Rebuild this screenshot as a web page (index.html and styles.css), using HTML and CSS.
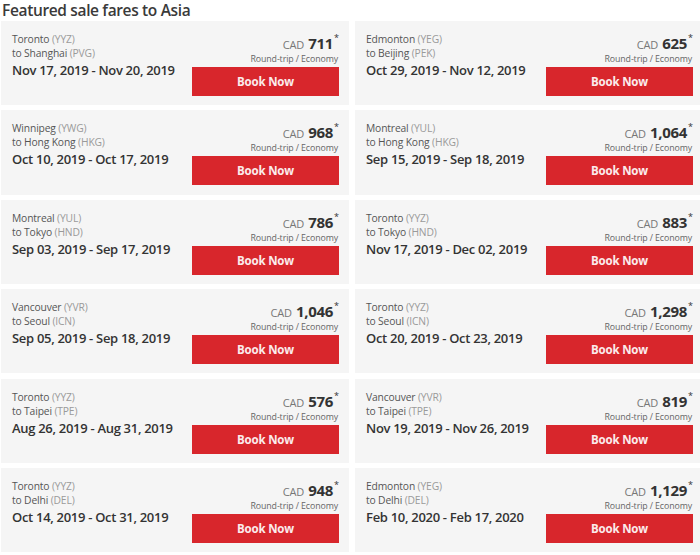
FILE: index.html
```html
<!DOCTYPE html>
<html>
<head>
<meta charset="utf-8">
<link rel="stylesheet" href="styles.css">
</head>
<body>
<h1 class="title">Featured sale fares to Asia</h1>
<div class="grid">
  <div class="card">
    <div class="route">
      <div class="city">Toronto <span class="code">(YYZ)</span></div>
      <div class="city">to Shanghai <span class="code">(PVG)</span></div>
      <div class="dates">Nov 17, 2019 - Nov 20, 2019</div>
    </div>
    <div class="fare">
      <div class="price"><span class="cur">CAD</span> <span class="amt">711</span><sup class="star">*</sup></div>
      <div class="trip">Round-trip / Economy</div>
      <a class="book">Book Now</a>
    </div>
  </div>
  <div class="card">
    <div class="route">
      <div class="city">Edmonton <span class="code">(YEG)</span></div>
      <div class="city">to Beijing <span class="code">(PEK)</span></div>
      <div class="dates">Oct 29, 2019 - Nov 12, 2019</div>
    </div>
    <div class="fare">
      <div class="price"><span class="cur">CAD</span> <span class="amt">625</span><sup class="star">*</sup></div>
      <div class="trip">Round-trip / Economy</div>
      <a class="book">Book Now</a>
    </div>
  </div>
  <div class="card">
    <div class="route">
      <div class="city">Winnipeg <span class="code">(YWG)</span></div>
      <div class="city">to Hong Kong <span class="code">(HKG)</span></div>
      <div class="dates">Oct 10, 2019 - Oct 17, 2019</div>
    </div>
    <div class="fare">
      <div class="price"><span class="cur">CAD</span> <span class="amt">968</span><sup class="star">*</sup></div>
      <div class="trip">Round-trip / Economy</div>
      <a class="book">Book Now</a>
    </div>
  </div>
  <div class="card">
    <div class="route">
      <div class="city">Montreal <span class="code">(YUL)</span></div>
      <div class="city">to Hong Kong <span class="code">(HKG)</span></div>
      <div class="dates">Sep 15, 2019 - Sep 18, 2019</div>
    </div>
    <div class="fare">
      <div class="price"><span class="cur">CAD</span> <span class="amt">1,064</span><sup class="star">*</sup></div>
      <div class="trip">Round-trip / Economy</div>
      <a class="book">Book Now</a>
    </div>
  </div>
  <div class="card">
    <div class="route">
      <div class="city">Montreal <span class="code">(YUL)</span></div>
      <div class="city">to Tokyo <span class="code">(HND)</span></div>
      <div class="dates">Sep 03, 2019 - Sep 17, 2019</div>
    </div>
    <div class="fare">
      <div class="price"><span class="cur">CAD</span> <span class="amt">786</span><sup class="star">*</sup></div>
      <div class="trip">Round-trip / Economy</div>
      <a class="book">Book Now</a>
    </div>
  </div>
  <div class="card">
    <div class="route">
      <div class="city">Toronto <span class="code">(YYZ)</span></div>
      <div class="city">to Tokyo <span class="code">(HND)</span></div>
      <div class="dates">Nov 17, 2019 - Dec 02, 2019</div>
    </div>
    <div class="fare">
      <div class="price"><span class="cur">CAD</span> <span class="amt">883</span><sup class="star">*</sup></div>
      <div class="trip">Round-trip / Economy</div>
      <a class="book">Book Now</a>
    </div>
  </div>
  <div class="card">
    <div class="route">
      <div class="city">Vancouver <span class="code">(YVR)</span></div>
      <div class="city">to Seoul <span class="code">(ICN)</span></div>
      <div class="dates">Sep 05, 2019 - Sep 18, 2019</div>
    </div>
    <div class="fare">
      <div class="price"><span class="cur">CAD</span> <span class="amt">1,046</span><sup class="star">*</sup></div>
      <div class="trip">Round-trip / Economy</div>
      <a class="book">Book Now</a>
    </div>
  </div>
  <div class="card">
    <div class="route">
      <div class="city">Toronto <span class="code">(YYZ)</span></div>
      <div class="city">to Seoul <span class="code">(ICN)</span></div>
      <div class="dates">Oct 20, 2019 - Oct 23, 2019</div>
    </div>
    <div class="fare">
      <div class="price"><span class="cur">CAD</span> <span class="amt">1,298</span><sup class="star">*</sup></div>
      <div class="trip">Round-trip / Economy</div>
      <a class="book">Book Now</a>
    </div>
  </div>
  <div class="card">
    <div class="route">
      <div class="city">Toronto <span class="code">(YYZ)</span></div>
      <div class="city">to Taipei <span class="code">(TPE)</span></div>
      <div class="dates">Aug 26, 2019 - Aug 31, 2019</div>
    </div>
    <div class="fare">
      <div class="price"><span class="cur">CAD</span> <span class="amt">576</span><sup class="star">*</sup></div>
      <div class="trip">Round-trip / Economy</div>
      <a class="book">Book Now</a>
    </div>
  </div>
  <div class="card">
    <div class="route">
      <div class="city">Vancouver <span class="code">(YVR)</span></div>
      <div class="city">to Taipei <span class="code">(TPE)</span></div>
      <div class="dates">Nov 19, 2019 - Nov 26, 2019</div>
    </div>
    <div class="fare">
      <div class="price"><span class="cur">CAD</span> <span class="amt">819</span><sup class="star">*</sup></div>
      <div class="trip">Round-trip / Economy</div>
      <a class="book">Book Now</a>
    </div>
  </div>
  <div class="card">
    <div class="route">
      <div class="city">Toronto <span class="code">(YYZ)</span></div>
      <div class="city">to Delhi <span class="code">(DEL)</span></div>
      <div class="dates">Oct 14, 2019 - Oct 31, 2019</div>
    </div>
    <div class="fare">
      <div class="price"><span class="cur">CAD</span> <span class="amt">948</span><sup class="star">*</sup></div>
      <div class="trip">Round-trip / Economy</div>
      <a class="book">Book Now</a>
    </div>
  </div>
  <div class="card">
    <div class="route">
      <div class="city">Edmonton <span class="code">(YEG)</span></div>
      <div class="city">to Delhi <span class="code">(DEL)</span></div>
      <div class="dates">Feb 10, 2020 - Feb 17, 2020</div>
    </div>
    <div class="fare">
      <div class="price"><span class="cur">CAD</span> <span class="amt">1,129</span><sup class="star">*</sup></div>
      <div class="trip">Round-trip / Economy</div>
      <a class="book">Book Now</a>
    </div>
  </div>
</div>
</body>
</html>
```
FILE: styles.css
```css
html, body {
  margin: 0;
  padding: 0;
  background: #fff;
}
body {
  width: 700px;
  height: 555px;
  overflow: hidden;
  font-family: "Open Sans", "Liberation Sans", sans-serif;
  color: #333;
}
.title {
  margin: 0 0 0 2px;
  font-size: 15.5px;
  letter-spacing: -0.35px;
  line-height: 21px;
  font-weight: 600;
  color: #3a3a3a;
}
.grid {
  display: grid;
  grid-template-columns: 348px 348px;
  column-gap: 6px;
  row-gap: 5.2px;
  padding-left: 1px;
}
.card {
  background: #f5f5f5;
  height: 84.2px;
  box-sizing: border-box;
  padding: 11px 10px 0 11px;
  display: flex;
  justify-content: space-between;
}
.route {
  display: flex;
  flex-direction: column;
}
.city {
  font-size: 10.3px;
  letter-spacing: -0.15px;
  line-height: 14px;
  color: #555;
}
.code {
  color: #9a9a9a;
}
.dates {
  font-size: 13px;
  letter-spacing: -0.3px;
  line-height: 20px;
  font-weight: 600;
  color: #333;
  white-space: nowrap;
}
.fare {
  width: 147px;
  display: flex;
  flex-direction: column;
  align-items: flex-end;
  padding-top: 1px;
}
.price {
  line-height: 20px;
  height: 20px;
  white-space: nowrap;
}
.cur {
  font-size: 11px;
  letter-spacing: -0.2px;
  color: #777;
}
.amt {
  font-size: 15px;
  letter-spacing: -0.3px;
  font-weight: 700;
  color: #333;
}
.star {
  font-size: 9px;
  color: #333;
  vertical-align: top;
  line-height: 9px;
  margin-left: 1px;
}
.trip {
  font-size: 8.8px;
  letter-spacing: -0.1px;
  line-height: 12px;
  color: #666;
  margin-right: 1px;
}
.book {
  display: block;
  margin-top: 2px;
  width: 147px;
  height: 29px;
  background: #d8262c;
  color: #fbecec;
  font-size: 11.5px;
  letter-spacing: -0.2px;
  font-weight: 700;
  line-height: 29px;
  text-align: center;
}
```
